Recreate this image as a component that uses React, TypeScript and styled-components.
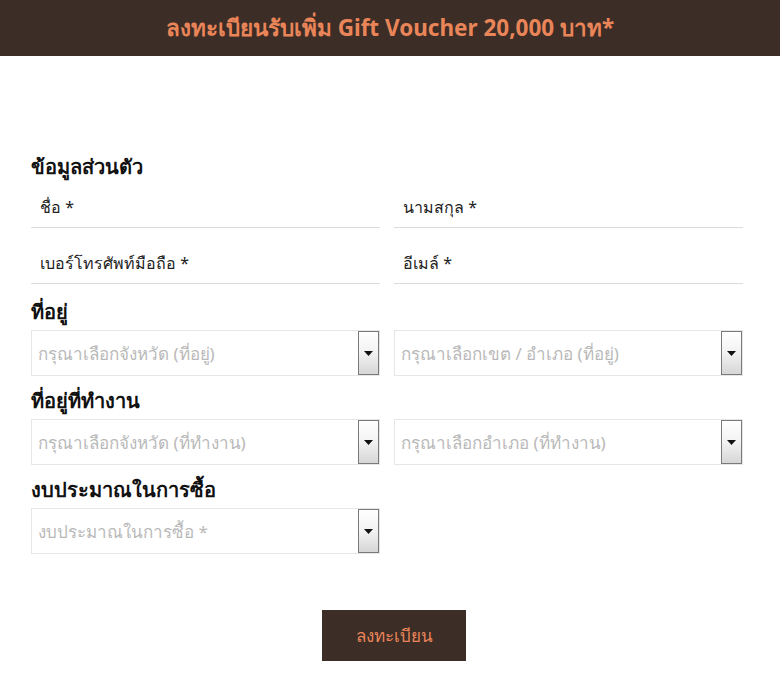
import styled, { createGlobalStyle } from "styled-components";

const GlobalStyle = createGlobalStyle`
    body {
        margin: 0;
        background: #ffffff;
        font-family: "Noto Sans", "DejaVu Sans", sans-serif;
    }
`;

function SelectBox({ placeholder }: { placeholder: string }) {
    return (
        <S.Select>
            <S.Placeholder>{placeholder}</S.Placeholder>
            <S.Arrow>
                <svg width="9" height="5" viewBox="0 0 9 5">
                    <path d="M0 0 L9 0 L4.5 5 Z" fill="#111" />
                </svg>
            </S.Arrow>
        </S.Select>
    );
}

function App() {
    return (
        <S.Page>
            <GlobalStyle />
            <S.Header>ลงทะเบียนรับเพิ่ม Gift Voucher 20,000 บาท*</S.Header>
            <S.Form>
                <S.Heading $bottom={0}>ข้อมูลส่วนตัว</S.Heading>
                <S.Grid $rowGap={8}>
                    <S.Field>ชื่อ *</S.Field>
                    <S.Field>นามสกุล *</S.Field>
                    <S.Field>เบอร์โทรศัพท์มือถือ *</S.Field>
                    <S.Field>อีเมล์ *</S.Field>
                </S.Grid>

                <S.Heading $top={15}>ที่อยู่</S.Heading>
                <S.Grid>
                    <SelectBox placeholder="กรุณาเลือกจังหวัด (ที่อยู่)" />
                    <SelectBox placeholder="กรุณาเลือกเขต / อำเภอ (ที่อยู่)" />
                </S.Grid>

                <S.Heading $top={12}>ที่อยู่ที่ทำงาน</S.Heading>
                <S.Grid>
                    <SelectBox placeholder="กรุณาเลือกจังหวัด (ที่ทำงาน)" />
                    <SelectBox placeholder="กรุณาเลือกอำเภอ (ที่ทำงาน)" />
                </S.Grid>

                <S.Heading $top={12}>งบประมาณในการซื้อ</S.Heading>
                <S.Grid>
                    <SelectBox placeholder="งบประมาณในการซื้อ *" />
                </S.Grid>

                <S.Actions>
                    <S.Submit type="button">ลงทะเบียน</S.Submit>
                </S.Actions>
            </S.Form>
        </S.Page>
    );
}

const S = {
    Page: styled.div`
        width: 780px;
        min-height: 688px;
    `,

    Header: styled.div`
        height: 56px;
        display: flex;
        align-items: center;
        justify-content: center;
        background: #3c2d26;
        color: #ea8559;
        font-size: 22.5px;
        font-weight: 700;
    `,

    Form: styled.div`
        width: 712px;
        margin-left: 31px;
        padding-top: 98px;
    `,

    Heading: styled.div<{ $top?: number; $bottom?: number }>`
        margin-top: ${(p) => p.$top ?? 0}px;
        margin-bottom: ${(p) => p.$bottom ?? 5}px;
        height: 26px;
        line-height: 26px;
        font-size: 20px;
        font-weight: 700;
        color: #111;
    `,

    Grid: styled.div<{ $rowGap?: number }>`
        display: grid;
        grid-template-columns: 349px 349px;
        column-gap: 14px;
        row-gap: ${(p) => p.$rowGap ?? 7}px;
    `,

    Field: styled.div`
        height: 48px;
        box-sizing: border-box;
        padding: 16px 0 0 9px;
        border-bottom: 1px solid #dcdcdc;
        line-height: 22px;
        font-size: 16px;
        color: #222;
    `,

    Select: styled.div`
        height: 46px;
        box-sizing: border-box;
        border: 1px solid #e6e6e6;
        background: #fff;
        display: flex;
        align-items: center;
        justify-content: space-between;
        padding-left: 6px;
    `,

    Placeholder: styled.span`
        font-size: 17px;
        color: #b9b9b9;
    `,

    Arrow: styled.div`
        width: 21px;
        height: 44px;
        box-sizing: border-box;
        border: 1px solid #7a7a7a;
        background: linear-gradient(#ffffff 0%, #f2f2f2 50%, #d6d6d6 100%);
        display: flex;
        align-items: center;
        justify-content: center;
    `,

    Actions: styled.div`
        display: flex;
        justify-content: center;
        padding-left: 14px;
        margin-top: 56px;
    `,

    Submit: styled.button`
        width: 144px;
        height: 51px;
        border: none;
        background: #3c2d26;
        color: #ea8559;
        font-family: "Noto Sans", "DejaVu Sans", sans-serif;
        font-size: 17px;
    `,
};

export default App;
